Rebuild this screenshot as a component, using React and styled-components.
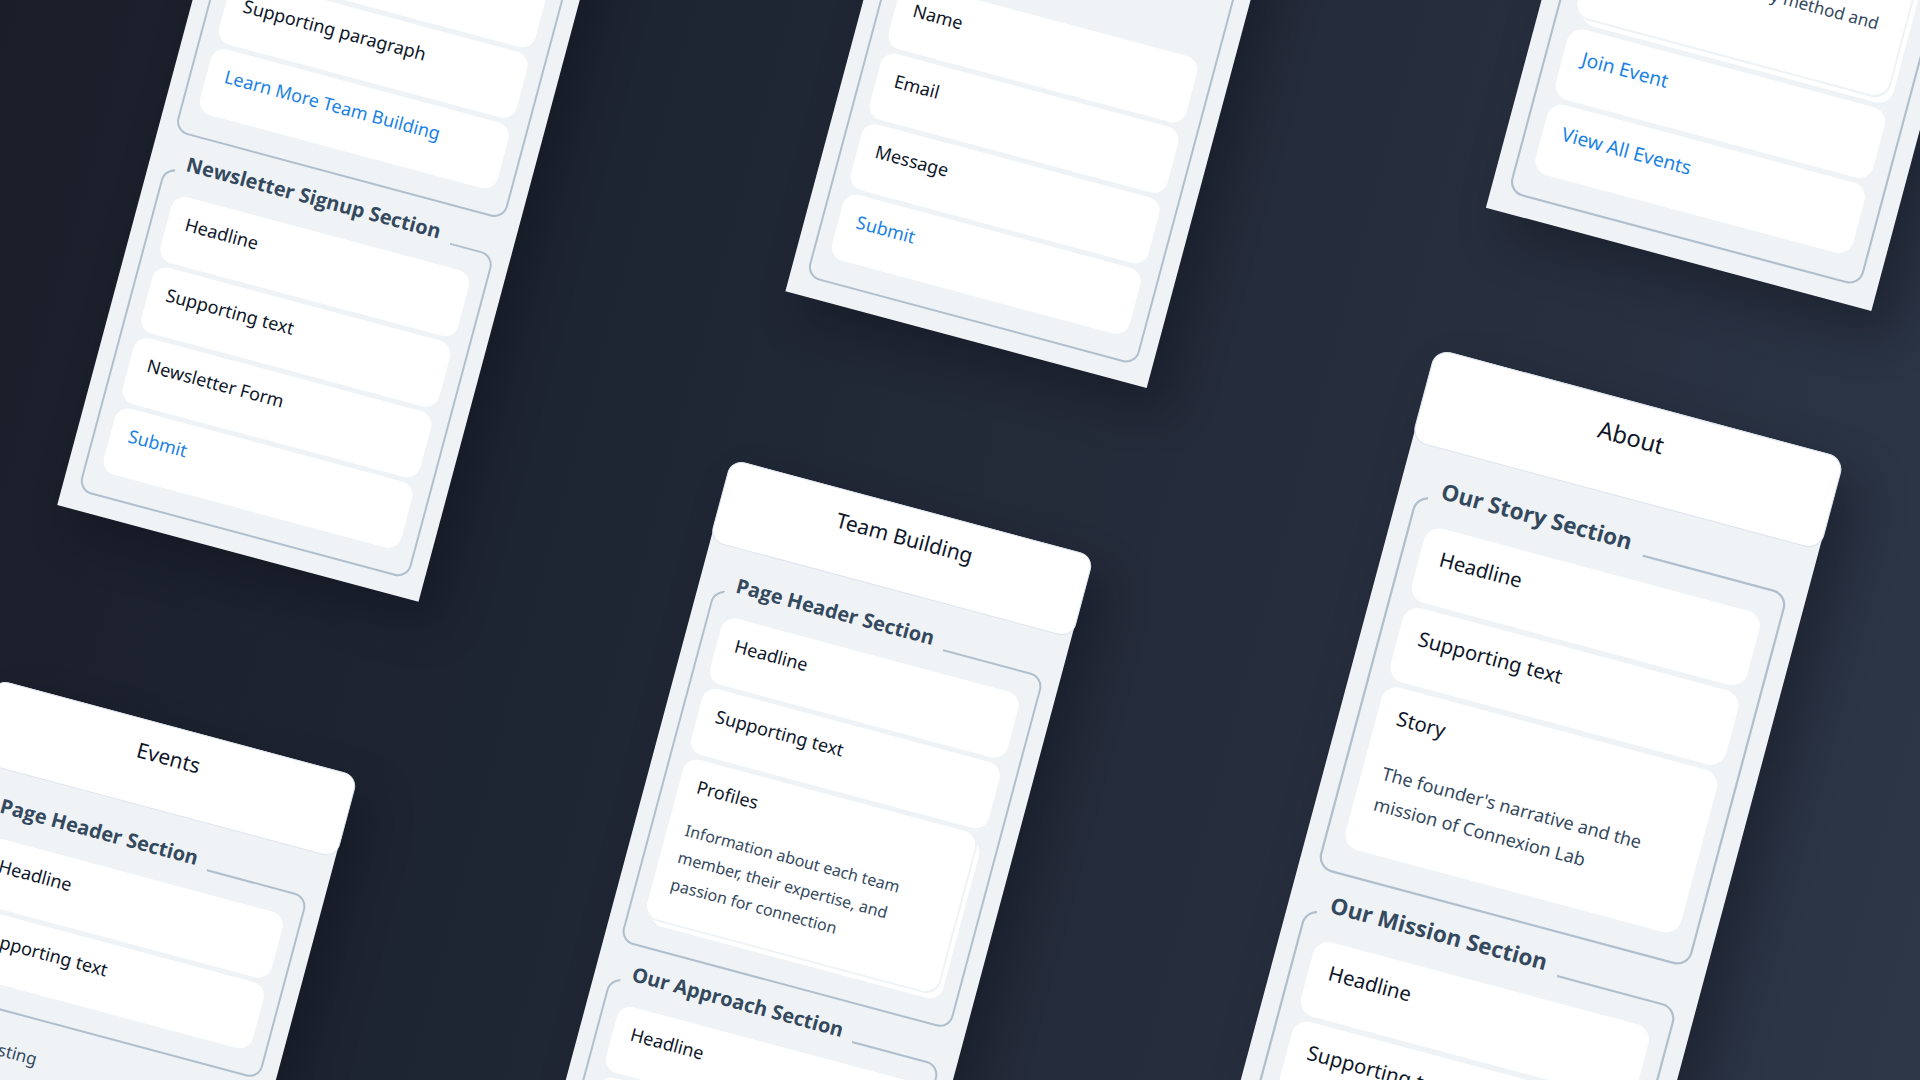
import React from "react";
import styled, { createGlobalStyle } from "styled-components";

const GlobalStyle = createGlobalStyle`
  * {
    box-sizing: border-box;
  }

  body {
    margin: 0;
    font-family: "Noto Sans", "Open Sans", sans-serif;
    color: #0f172a;
    background-color: #1b202c;
  }
`;

const Canvas = styled.main`
  position: relative;
  width: 100%;
  height: 100vh;
  overflow: hidden;
  background: linear-gradient(105deg, #1a1e29 0%, #1e2532 30%, #252c3b 62%, #2d3748 100%);
`;

/* Tilted plane: every page hangs from its top left or bottom left corner */
const Board = styled.div`
  position: absolute;
  top: 0;
  left: 0;
  width: 0;
  height: 0;
  transform: rotate(15deg);
`;

const Page = styled.article`
  position: absolute;
  left: ${(props) => props.$left}px;
  ${(props) => (props.$bottom !== undefined ? `bottom: ${-props.$bottom}px;` : `top: ${props.$top}px;`)}
  width: 374px;
  background-color: #eff3f6;
  border-radius: ${(props) => (props.$bottom !== undefined ? "0" : "14px 14px 0 0")};
  box-shadow: 22px 20px 44px rgba(12, 16, 26, 0.4);
  transform: scale(${(props) => props.$scale || 1});
  transform-origin: ${(props) => (props.$bottom !== undefined ? "bottom left" : "top left")};
`;

const PageTitle = styled.h1`
  height: 85px;
  margin: 0 -1px;
  padding-top: 16px;
  border: 1px solid #dfe5ee;
  border-radius: 14px;
  background-color: #fff;
  font-size: 21px;
  line-height: 28px;
  font-weight: 400;
  text-align: center;
`;

const Sections = styled.div`
  display: flex;
  flex-direction: column;
  gap: 16px;
  padding: 24px 16px 19px;
`;

const Section = styled.fieldset`
  display: flex;
  flex-direction: column;
  gap: 5px;
  min-width: 0;
  margin: 0;
  padding: 3px 15px 23px;
  border: 2px solid #b0bfcd;
  border-radius: 14px;
`;

const SectionName = styled.legend`
  margin-left: -6px;
  padding: 0 12px 17px 10px;
  font-family: "Open Sans", sans-serif;
  font-size: 20px;
  line-height: 24px;
  font-weight: 700;
  color: #34495e;
`;

const Details = styled.p`
  margin: 22px 0 6px;
  font-size: 16px;
  line-height: 28px;
  color: #34495e;
`;

const Block = styled.div`
  min-height: 68px;
  padding: 12px 18px 24px;
  border-radius: 14px;
  background-color: #fff;
  font-size: 18px;
  line-height: 29px;
  ${(props) =>
    props.$stacked &&
    `
    margin: 0 6px 6px 0;
    box-shadow: 1px 1px 0 1px #eff3f6, 6px 6px 0 #fff;

    ${Details} {
      margin: 16px 0 0;
    }
  `}
`;

const Action = styled.a`
  color: #1a82e6;
  text-decoration: none;
`;

const Note = styled.p`
  margin: 0;
  padding: 8px 20px 20px;
  font-size: 17px;
  line-height: 28px;
  color: #34495e;
`;

const pages = [
  {
    left: 186,
    bottom: 473,
    sections: [
      {
        name: "Team Building Section",
        blocks: [{ label: "Headline" }, { label: "Supporting paragraph" }, { link: "Learn More Team Building" }],
      },
      {
        name: "Newsletter Signup Section",
        blocks: [{ label: "Headline" }, { label: "Supporting text" }, { label: "Newsletter Form" }, { link: "Submit" }],
      },
    ],
  },
  {
    left: 834,
    bottom: 78,
    sections: [
      {
        name: "Contact Section",
        blocks: [
          { label: "Headline" },
          { note: "Contact Form" },
          { label: "Name" },
          { label: "Email" },
          { label: "Message" },
          { link: "Submit" },
        ],
      },
    ],
  },
  {
    left: 1489,
    bottom: -184,
    scale: 1.067,
    sections: [
      {
        name: "Events Section",
        blocks: [
          { label: "Events", stacked: true, details: "Filter future events by method and type" },
          { link: "Join Event" },
          { link: "View All Events" },
        ],
      },
    ],
  },
  {
    left: 172,
    top: 657,
    title: "Events",
    sections: [
      { name: "Page Header Section", blocks: [{ label: "Headline" }, { label: "Supporting text" }] },
      { note: "Event Listing" },
      { name: "Upcoming Events Section", blocks: [{ label: "Headline" }] },
    ],
  },
  {
    left: 826,
    top: 254,
    title: "Team Building",
    sections: [
      {
        name: "Page Header Section",
        blocks: [
          { label: "Headline" },
          { label: "Supporting text" },
          {
            label: "Profiles",
            stacked: true,
            details: "Information about each team member, their expertise, and passion for connection",
          },
        ],
      },
      { name: "Our Approach Section", blocks: [{ label: "Headline" }, { label: "Supporting text" }] },
    ],
  },
  {
    left: 1478,
    top: -35,
    scale: 1.127,
    title: "About",
    sections: [
      {
        name: "Our Story Section",
        blocks: [
          { label: "Headline" },
          { label: "Supporting text" },
          { label: "Story", details: "The founder's narrative and the mission of Connexion Lab" },
        ],
      },
      { name: "Our Mission Section", blocks: [{ label: "Headline" }, { label: "Supporting text" }] },
    ],
  },
];

const PageBlock = ({ block }) => {
  if (block.note) {
    return <Note>{block.note}</Note>;
  }

  return (
    <Block $stacked={block.stacked}>
      {block.link ? <Action href="#">{block.link}</Action> : block.label}
      {block.details && <Details>{block.details}</Details>}
    </Block>
  );
};

const PageSection = ({ section }) => {
  if (section.note) {
    return <Note>{section.note}</Note>;
  }

  return (
    <Section>
      <SectionName>{section.name}</SectionName>
      {section.blocks.map((block, i) => (
        <PageBlock key={i} block={block} />
      ))}
    </Section>
  );
};

const App = () => {
  return (
    <>
      <GlobalStyle />
      <Canvas>
        <Board>
          {pages.map((page, i) => (
            <Page key={i} $left={page.left} $top={page.top} $bottom={page.bottom} $scale={page.scale}>
              {page.title && <PageTitle>{page.title}</PageTitle>}
              <Sections>
                {page.sections.map((section, j) => (
                  <PageSection key={j} section={section} />
                ))}
              </Sections>
            </Page>
          ))}
        </Board>
      </Canvas>
    </>
  );
};

export default App;
